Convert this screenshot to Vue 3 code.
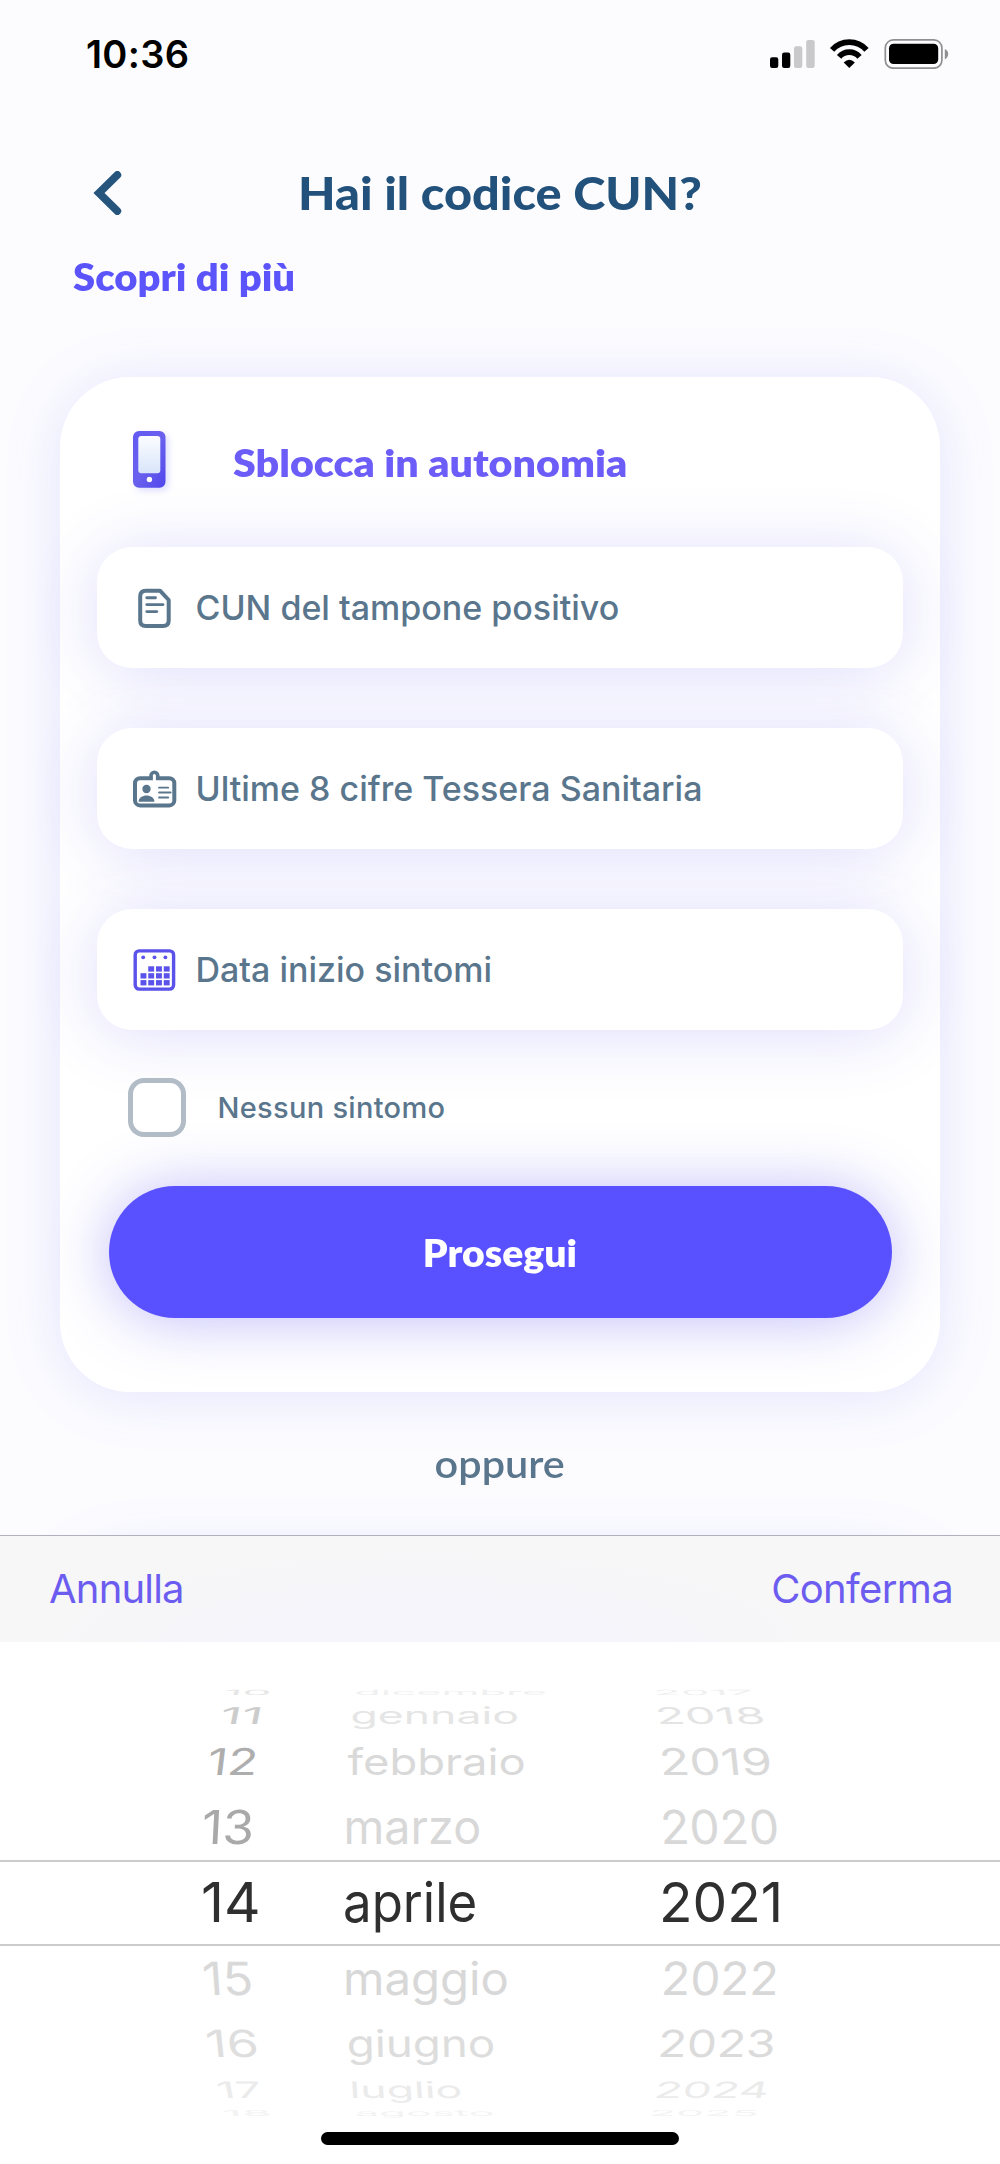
<script setup>
import { ref } from 'vue'

const checked = ref(false)

// Vertical geometry of the nine visible wheel rows: height and flattening
const rows = [
  { height: 52.5, scaleY: 0.13 },
  { height: 29, scaleY: 0.42 },
  { height: 51.5, scaleY: 0.67 },
  { height: 69, scaleY: 0.85 },
  { height: 78, scaleY: 1 },
  { height: 73, scaleY: 0.83 },
  { height: 62, scaleY: 0.68 },
  { height: 41, scaleY: 0.41 },
  { height: 18, scaleY: 0.15 },
]

// Each entry: label, left offset, horizontal scale, lean in degrees, colour
const wheels = [
  {
    name: 'day',
    items: [
      ['10', 223, 0.84, -14, '#e6e6e6'],
      ['11', 219, 0.95, -11, '#cccccc'],
      ['12', 206, 0.9, -7, '#aeaeae'],
      ['13', 201, 0.93, -3, '#a9a9a9'],
      ['14', 201, 1.03, 0, '#2f2f2f'],
      ['15', 203.5, 0.91, 4, '#d9d9d9'],
      ['16', 207, 0.94, 6, '#dedede'],
      ['17', 218, 0.84, 11, '#ebebeb'],
      ['18', 223, 0.88, 14, '#f3f3f3'],
    ],
  },
  {
    name: 'month',
    items: [
      ['dicembre', 354, 0.79, -3, '#f0f0f0'],
      ['gennaio', 350.5, 0.81, 0, '#e5e5e5'],
      ['febbraio', 347.5, 0.825, 0, '#d9d9d9'],
      ['marzo', 343.5, 0.848, 0, '#d8d8d8'],
      ['aprile', 343, 0.927, 0, '#2f2f2f'],
      ['maggio', 343, 0.86, 0, '#d8d8d8'],
      ['giugno', 347, 0.83, 1, '#dddddd'],
      ['luglio', 350, 0.81, 4, '#ebebeb'],
      ['agosto', 355, 0.79, 5, '#f3f3f3'],
    ],
  },
  {
    name: 'year',
    items: [
      ['2017', 654, 0.82, 14, '#f0f0f0'],
      ['2018', 657, 0.88, 11, '#e4e4e4'],
      ['2019', 660.5, 0.905, 6, '#d9d9d9'],
      ['2020', 661, 0.873, 3, '#d8d8d8'],
      ['2021', 659, 1, 0, '#2f2f2f'],
      ['2022', 660.5, 0.87, -2, '#d8d8d8'],
      ['2023', 657, 0.867, -4, '#dbdbdb'],
      ['2024', 653, 0.84, -11, '#ebebeb'],
      ['2025', 648, 0.815, -14, '#f3f3f3'],
    ],
  },
]

const itemStyle = ([, left, scaleX, lean, color], i) => ({
  color,
  transform: `translateX(${left}px) skewX(${lean}deg) scale(${scaleX}, ${rows[i].scaleY})`,
})

const calendarCells = [
  [1, 0], [2, 0], [3, 0],
  [0, 1], [1, 1], [2, 1], [3, 1],
  [0, 2], [1, 2], [2, 2], [3, 2],
]
</script>

<template>
  <div class="screen">
    <div class="status">
      <span class="clock">10:36</span>
      <svg class="indicators" width="179" height="30" viewBox="0 0 179 30">
        <rect x="0" y="18.3" width="8.3" height="10.7" rx="2.2" />
        <rect x="12" y="13.5" width="8.3" height="15.5" rx="2.2" />
        <rect x="24" y="7.2" width="8.3" height="21.8" rx="2.2" fill="#c9c9cb" />
        <rect x="36.2" y="1" width="8.5" height="28" rx="2.2" fill="#c9c9cb" />
        <g fill="none" stroke="#000" stroke-width="5.7">
          <path d="M62.1 10.8A23 23 0 0 1 96.5 10.8" />
          <path d="M69.1 17.9A13.4 13.4 0 0 1 89.5 17.9" />
        </g>
        <path d="M73.7 23.4Q79.3 18.2 84.9 23.4L79.3 29Z" />
        <rect x="115.3" y=".9" width="56.6" height="28.3" rx="8" fill="none" stroke="#8f8f91" stroke-width="1.7" />
        <rect x="119" y="4.7" width="49.2" height="20.4" rx="4.6" />
        <path d="M174.8 10Q178.2 11.6 178.2 15T174.8 20.4Z" fill="#8f8f91" />
      </svg>
    </div>

    <header class="header">
      <svg class="back" width="29" height="44" viewBox="0 0 29 44">
        <path d="M24.3 3.9L6 22L24.3 40.1" fill="none" stroke="#25547c" stroke-width="7.8" stroke-linecap="round" />
      </svg>
      <h1 class="title">Hai il codice CUN?</h1>
    </header>

    <a class="more">Scopri di più</a>

    <section class="card">
      <div class="card-head">
        <svg class="phone" width="33" height="57" viewBox="0 0 33 57">
          <defs>
            <linearGradient id="body" x1="0" y1="0" x2="1" y2="1">
              <stop offset="0" stop-color="#625af2" />
              <stop offset=".5" stop-color="#6a61ee" />
              <stop offset="1" stop-color="#5046ec" />
            </linearGradient>
            <linearGradient id="glass" x1="0" y1="0" x2="0" y2="1">
              <stop offset="0" stop-color="#fbfdff" />
              <stop offset="1" stop-color="#d9e5fb" />
            </linearGradient>
          </defs>
          <rect width="32.5" height="56.8" rx="6" fill="url(#body)" />
          <rect x="5.3" y="5" width="22" height="37.3" rx="3" fill="url(#glass)" />
          <circle cx="16.4" cy="48.5" r="2.7" fill="#fff" />
        </svg>
        <h2 class="card-title">Sblocca in autonomia</h2>
      </div>

      <div class="fields">
        <label class="field">
          <svg class="icon" width="44" height="42" viewBox="0 0 44 42">
            <g fill="none" stroke="#5a768d" stroke-linecap="round" stroke-linejoin="round">
              <path d="M12.8 3.7H27L35.7 13V33.5Q35.7 39.1 30.1 39.1H12.8Q7.2 39.1 7.2 33.5V9.3Q7.2 3.7 12.8 3.7Z" stroke-width="4" />
              <path d="M13.8 10.7H22.5M13.8 17.6H30M13.8 24.6H23.8" stroke-width="2.9" />
            </g>
          </svg>
          <span>CUN del tampone positivo</span>
        </label>
        <label class="field">
          <svg class="icon" width="44" height="42" viewBox="0 0 44 42">
            <rect x="2" y="10.2" width="39.3" height="27.2" rx="5" fill="none" stroke="#5a768d" stroke-width="4" />
            <path d="M16.2 11.5V7.8A5.2 5.2 0 0 1 26.6 7.8V11.5Z" fill="#5a768d" />
            <path d="M21.4 7.4V15" stroke="#fff" stroke-width="3" stroke-linecap="round" />
            <circle cx="13.5" cy="21" r="4.200" fill="#5a768d" />
            <path d="M5.6 33.7C5.6 25.3 21.4 25.3 21.4 33.7Z" fill="#5a768d" />
            <path d="M26 19.7H35.200M26 24.5H37.7M26 29.5H35.2" stroke="#5a768d" stroke-width="1.800" stroke-linecap="round" />
          </svg>
          <span>Ultime 8 cifre Tessera Sanitaria</span>
        </label>
        <label class="field">
          <svg class="icon" width="44" height="42" viewBox="0 0 44 42">
            <rect x="2.200" y="1.900" width="38.400" height="38.200" rx="4" fill="none" stroke="#5a52ea" stroke-width="3.400" />
            <g fill="#5a52ea">
              <circle v-for="x in [10.2, 21.5, 32.4]" :key="x" :cx="x" cy="8.300" r="1.900" />
              <rect
                v-for="[c, r] in calendarCells"
                :key="`${c}-${r}`"
                :x="7.5 + c * 7.75"
                :y="17.3 + r * 6.9"
                width="5.900"
                height="5.300"
              />
            </g>
          </svg>
          <span>Data inizio sintomi</span>
        </label>
      </div>

      <div class="option" @click="checked = !checked">
        <span class="checkbox" :class="{ on: checked }"></span>
        <span class="option-label">Nessun sintomo</span>
      </div>

      <button class="submit"><span class="submit-label">Prosegui</span></button>
    </section>

    <p class="or"><span class="or-label">oppure</span></p>
    <section class="card next-card"></section>

    <div class="sheet">
      <div class="toolbar">
        <span class="cancel">Annulla</span>
        <span class="confirm">Conferma</span>
      </div>
      <div class="picker">
        <div v-for="wheel in wheels" :key="wheel.name" class="wheel">
          <div
            v-for="(item, i) in wheel.items"
            :key="item[0]"
            class="row"
            :style="{ height: rows[i].height + 'px' }"
          >
            <span class="value" :style="itemStyle(item, i)">{{ item[0] }}</span>
          </div>
        </div>
        <div class="selection"></div>
        <div class="home"></div>
      </div>
    </div>
  </div>
</template>

<style>
body {
  background: #fcfcff;
}
</style>

<style scoped>
.screen {
  position: relative;
  box-sizing: border-box;
  width: 1000px;
  height: 2164px;
  padding: 31px 60px 0;
  overflow: hidden;
  background: #fcfcff;
  font-family: Inter, "Liberation Sans", sans-serif;
}

.status {
  display: flex;
  justify-content: space-between;
  height: 46px;
  margin-right: -9px;
  padding-left: 26px;
}

.clock {
  font-size: 38px;
  font-weight: 600;
  line-height: 46px;
  letter-spacing: 0.3px;
  color: #000;
}

.indicators {
  display: block;
  margin-top: 8px;
}

.header {
  display: flex;
  align-items: flex-start;
  height: 56px;
  margin-top: 87px;
  padding-left: 33px;
}

.back {
  flex: none;
  margin-top: 7px;
}

.title {
  margin: 0.5px 0 0 176px;
  font: 900 46px/56px Lato, sans-serif;
  white-space: nowrap;
  transform: scaleX(1.058);
  transform-origin: 0 50%;
  color: #22527b;
}

.more {
  display: block;
  margin: 33px 0 0 13px;
  font: 800 38px/46px Lato, sans-serif;
  transform: scaleX(1.053);
  transform-origin: 0 50%;
  color: #5c54fb;
}

.card {
  box-sizing: border-box;
  width: 879.5px;
  height: 1014.5px;
  margin-top: 78px;
  padding: 54px 36.5px 0;
  border-radius: 70px;
  background: #fff;
  box-shadow: 0 4px 60px rgba(88, 80, 240, 0.14);
}

.card-head {
  display: flex;
  align-items: flex-start;
  height: 57px;
  padding-left: 36.5px;
}

.phone {
  flex: none;
  filter: drop-shadow(3px 3px 3px rgba(80, 70, 240, 0.18));
}

.card-title {
  margin: 7.5px 0 0 66.5px;
  font: 800 38px/46px Lato, sans-serif;
  white-space: nowrap;
  transform: scaleX(1.083);
  transform-origin: 0 50%;
  color: #6c5cf8;
}

.fields {
  display: flex;
  flex-direction: column;
  gap: 60px;
  margin-top: 59px;
}

.field {
  display: flex;
  align-items: center;
  box-sizing: border-box;
  height: 121px;
  padding-left: 36px;
  gap: 19px;
  border-radius: 35px;
  background: #fff;
  box-shadow: 0 5px 66px rgba(85, 75, 240, 0.19);
  font-size: 34px;
  font-weight: 530;
  line-height: 41px;
  color: #5a768d;
}

.icon {
  flex: none;
}

.option {
  display: flex;
  align-items: center;
  height: 59px;
  margin-top: 48px;
  padding-left: 31px;
}

.checkbox {
  box-sizing: border-box;
  width: 58.5px;
  height: 58.5px;
  border: 5px solid #b2bcc6;
  border-radius: 16px;
  background: #fff;
}

.checkbox.on {
  background: #5951ff;
}

.option-label {
  margin-left: 31.5px;
  font-size: 29px;
  font-weight: 530;
  line-height: 35px;
  letter-spacing: 0.3px;
  color: #5a768d;
}

.submit {
  display: block;
  width: 783px;
  height: 132px;
  margin: 48.7px 0 0 12px;
  padding: 0;
  border: 0;
  border-radius: 66px;
  background: #5951ff;
  box-shadow: 0 2px 60px rgba(89, 81, 240, 0.38);
  font: 800 38px/46px Lato, sans-serif;
  color: #fff;
}

.submit-label {
  display: inline-block;
  transform: scaleX(1.03);
}

.or {
  margin: 48.5px 0 0;
  font: 600 38px/46px Lato, sans-serif;
  text-align: center;
  color: #5a768d;
}

.or-label {
  display: inline-block;
  transform: scaleX(1.09);
}

.next-card {
  margin-top: 62px;
}

.sheet {
  position: absolute;
  left: 0;
  bottom: 0;
  width: 1000px;
  height: 629px;
  background: #fff;
}

.toolbar {
  display: flex;
  align-items: center;
  justify-content: space-between;
  box-sizing: border-box;
  height: 107px;
  padding: 0 49px;
  border-top: 1px solid #b1b1bd;
  background: radial-gradient(ellipse 420px 100px at 430px 100%, #f5f5fb 40%, #f7f7f7);
  font-size: 40px;
  line-height: 48px;
  color: #6c5cf0;
}

.cancel {
  letter-spacing: -0.8px;
}

.confirm {
  margin-right: -2px;
  letter-spacing: -0.64px;
}

.picker {
  position: relative;
  display: grid;
  height: 522px;
}

.wheel {
  display: flex;
  flex-direction: column;
  grid-area: 1 / 1;
}

/* Row bottoms coincide with the text baselines */
.row {
  display: flex;
  flex: none;
  align-items: flex-end;
}

.value {
  margin-bottom: -13px;
  font-size: 55px;
  line-height: 66px;
  white-space: nowrap;
  transform-origin: 0 53px;
}

.selection {
  position: absolute;
  top: 218px;
  left: 0;
  right: 0;
  height: 82px;
  border: solid #cccccc;
  border-width: 2px 0;
}

.home {
  position: absolute;
  left: 321px;
  top: 490px;
  width: 358px;
  height: 12.5px;
  border-radius: 7px;
  background: #000;
}
</style>
